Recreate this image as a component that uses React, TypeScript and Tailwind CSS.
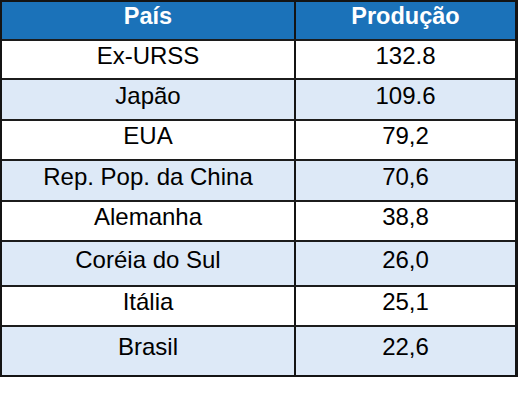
type Row = {
  pais: string;
  producao: string;
  h: string;
};

const rows: Row[] = [
  { pais: "Ex-URSS", producao: "132.8", h: "h-[39px]" },
  { pais: "Japão", producao: "109.6", h: "h-[41px]" },
  { pais: "EUA", producao: "79,2", h: "h-[40px]" },
  { pais: "Rep. Pop. da China", producao: "70,6", h: "h-[41px]" },
  { pais: "Alemanha", producao: "38,8", h: "h-[40px]" },
  { pais: "Coréia do Sul", producao: "26,0", h: "h-[45px]" },
  { pais: "Itália", producao: "25,1", h: "h-[40px]" },
  { pais: "Brasil", producao: "22,6", h: "h-[50px]" },
];

const App = () => {
  return (
    <div className="w-[518px] h-[400px] bg-white font-['Liberation_Sans',Arial,sans-serif]">
      <div className="w-[518px] border-2 border-[#141414] border-r-[3px]">
        <div className="grid grid-cols-[294px_1fr] h-[37px] bg-[#1b72b9] text-white font-bold text-[23.5px] leading-[23px]">
          <div className="flex items-center justify-center pb-2 border-r-2 border-[#141414]">País</div>
          <div className="flex items-center justify-center pb-2">Produção</div>
        </div>
        {rows.map((r, i) => (
          <div
            key={r.pais}
            className={`grid grid-cols-[294px_1fr] border-t-2 border-[#1c1c1c] text-[24px] leading-[24px] text-black ${r.h} ${
              i % 2 === 1 ? "bg-[#dde9f7]" : "bg-white"
            }`}
          >
            <div className="flex items-center justify-center pb-2 border-r-2 border-[#141414]">{r.pais}</div>
            <div className="flex items-center justify-center pb-2">{r.producao}</div>
          </div>
        ))}
      </div>
    </div>
  );
};

export default App;
